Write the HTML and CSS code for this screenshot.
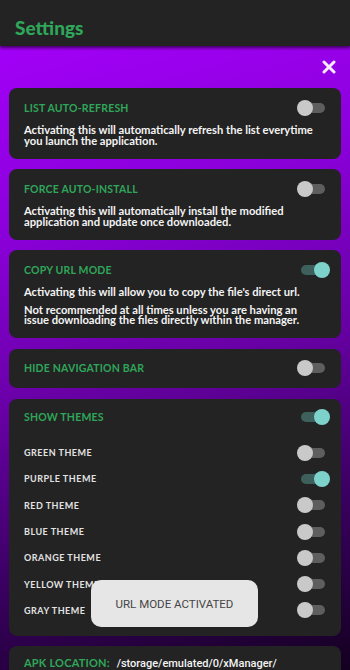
FILE: index.html
```html
<!DOCTYPE html>
<html lang="en">
<head>
    <meta charset="UTF-8">
    <meta name="viewport" content="width=device-width, initial-scale=1.0">
    <title>Settings</title>
    <link rel="stylesheet" href="styles.css">
</head>
<body>
    <div class="app-bar">
        <h1>Settings</h1>
    </div>

    <div class="settings">
        <div class="close-row">
            <svg class="close" width="14" height="14" viewBox="0 0 14 14">
                <path d="M2 2 L12 12 M12 2 L2 12" stroke="#fbeaff" stroke-width="3" stroke-linecap="round"/>
            </svg>
        </div>

        <!-- List auto-refresh -->
        <div class="card">
            <div class="card-row">
                <span class="card-title">LIST AUTO-REFRESH</span>
                <span class="toggle"></span>
            </div>
            <p class="desc">Activating this will automatically refresh the list everytime you launch the application.</p>
        </div>

        <!-- Force auto-install -->
        <div class="card">
            <div class="card-row">
                <span class="card-title">FORCE AUTO-INSTALL</span>
                <span class="toggle"></span>
            </div>
            <p class="desc">Activating this will automatically install the modified application and update once downloaded.</p>
        </div>

        <!-- Copy url mode -->
        <div class="card">
            <div class="card-row">
                <span class="card-title">COPY URL MODE</span>
                <span class="toggle on"></span>
            </div>
            <p class="desc">Activating this will allow you to copy the file's direct url.</p>
            <p class="desc second">Not recommended at all times unless you are having an issue downloading the files directly within the manager.</p>
        </div>

        <div class="card">
            <div class="card-row">
                <span class="card-title">HIDE NAVIGATION BAR</span>
                <span class="toggle"></span>
            </div>
        </div>

        <!-- Themes -->
        <div class="card themes">
            <div class="card-row">
                <span class="card-title">SHOW THEMES</span>
                <span class="toggle on"></span>
            </div>
            <div class="theme-list">
                <div class="theme-row"><span>GREEN THEME</span><span class="toggle"></span></div>
                <div class="theme-row"><span>PURPLE THEME</span><span class="toggle on"></span></div>
                <div class="theme-row"><span>RED THEME</span><span class="toggle"></span></div>
                <div class="theme-row"><span>BLUE THEME</span><span class="toggle"></span></div>
                <div class="theme-row"><span>ORANGE THEME</span><span class="toggle"></span></div>
                <div class="theme-row"><span>YELLOW THEME</span><span class="toggle"></span></div>
                <div class="theme-row"><span>GRAY THEME</span><span class="toggle"></span></div>
            </div>
        </div>

        <div class="card location">
            <span class="card-title">APK LOCATION:</span>
            <span class="path">/storage/emulated/0/xManager/</span>
        </div>
    </div>

    <div class="toast">URL MODE ACTIVATED</div>
</body>
</html>
```

FILE: styles.css
```css
* {
    margin: 0;
    padding: 0;
    box-sizing: border-box;
}

body {
    font-family: Lato, "Open Sans", sans-serif;
    background-color: #232323;
    color: #f4f4f4;
    width: 350px;
    height: 670px;
    overflow: hidden;
}

.app-bar {
    height: 46px;
    padding: 0 15px;
    display: flex;
    align-items: center;
    background-color: #232323;
    box-shadow: 0 2px 3px rgba(0, 0, 0, 0.6);
    position: relative;
    z-index: 1;
}

.app-bar h1 {
    font-size: 19px;
    font-weight: 900;
    color: #2fa65a;
    padding-top: 8px;
}

.settings {
    height: 624px;
    padding: 0 9px;
    background: linear-gradient(165deg, #a200f7 0%, #8c00dc 25%, #6a00a8 50%, #3a0062 75%, #140020 100%);
}

.close-row {
    height: 42px;
    display: flex;
    align-items: center;
    justify-content: flex-end;
    padding-right: 5px;
}

.card {
    background-color: #232323;
    border-radius: 8px;
    padding: 12px 12px 12.5px 15px;
    margin-bottom: 10.5px;
}

.card-row {
    height: 15px;
    display: flex;
    align-items: center;
    justify-content: space-between;
}

.card-title {
    font-size: 10.5px;
    font-weight: 700;
    color: #2fa65a;
    letter-spacing: 0.2px;
}

.desc {
    font-size: 11.2px;
    font-weight: 700;
    line-height: 10.5px;
    margin-top: 10px;
    padding-right: 4px;
}

.desc.second {
    margin-top: 7px;
    padding-right: 16px;
}

/* switch */
.toggle {
    position: relative;
    flex-shrink: 0;
    width: 24px;
    height: 10px;
    margin-right: 4px;
    border-radius: 5px;
    background-color: #5e5e5e;
}

.toggle::after {
    content: "";
    position: absolute;
    top: -3px;
    left: -4px;
    width: 16px;
    height: 16px;
    border-radius: 50%;
    background-color: #c9c9c9;
}

.toggle.on {
    background-color: #3e605d;
}

.toggle.on::after {
    left: auto;
    right: -5px;
    background-color: #7dd3cc;
}

.themes {
    padding-top: 11px;
    padding-bottom: 12px;
}

.theme-list {
    margin-top: 15px;
}

.theme-row {
    height: 26.3px;
    display: flex;
    align-items: center;
    justify-content: space-between;
    font-size: 9px;
    font-weight: 700;
    letter-spacing: 0.5px;
    color: #e2e2e2;
}

.location {
    padding-top: 10px;
    font-size: 11px;
}

.location .card-title {
    font-size: 11px;
    margin-right: 4px;
}

.path {
    font-family: Roboto, sans-serif;
    font-weight: 500;
}

.toast {
    position: absolute;
    left: 91px;
    top: 580px;
    width: 167px;
    height: 47px;
    border-radius: 10px;
    background-color: #e6e6e6;
    color: #454545;
    font-family: Roboto, sans-serif;
    font-size: 11.5px;
    display: flex;
    align-items: center;
    justify-content: center;
}
```
